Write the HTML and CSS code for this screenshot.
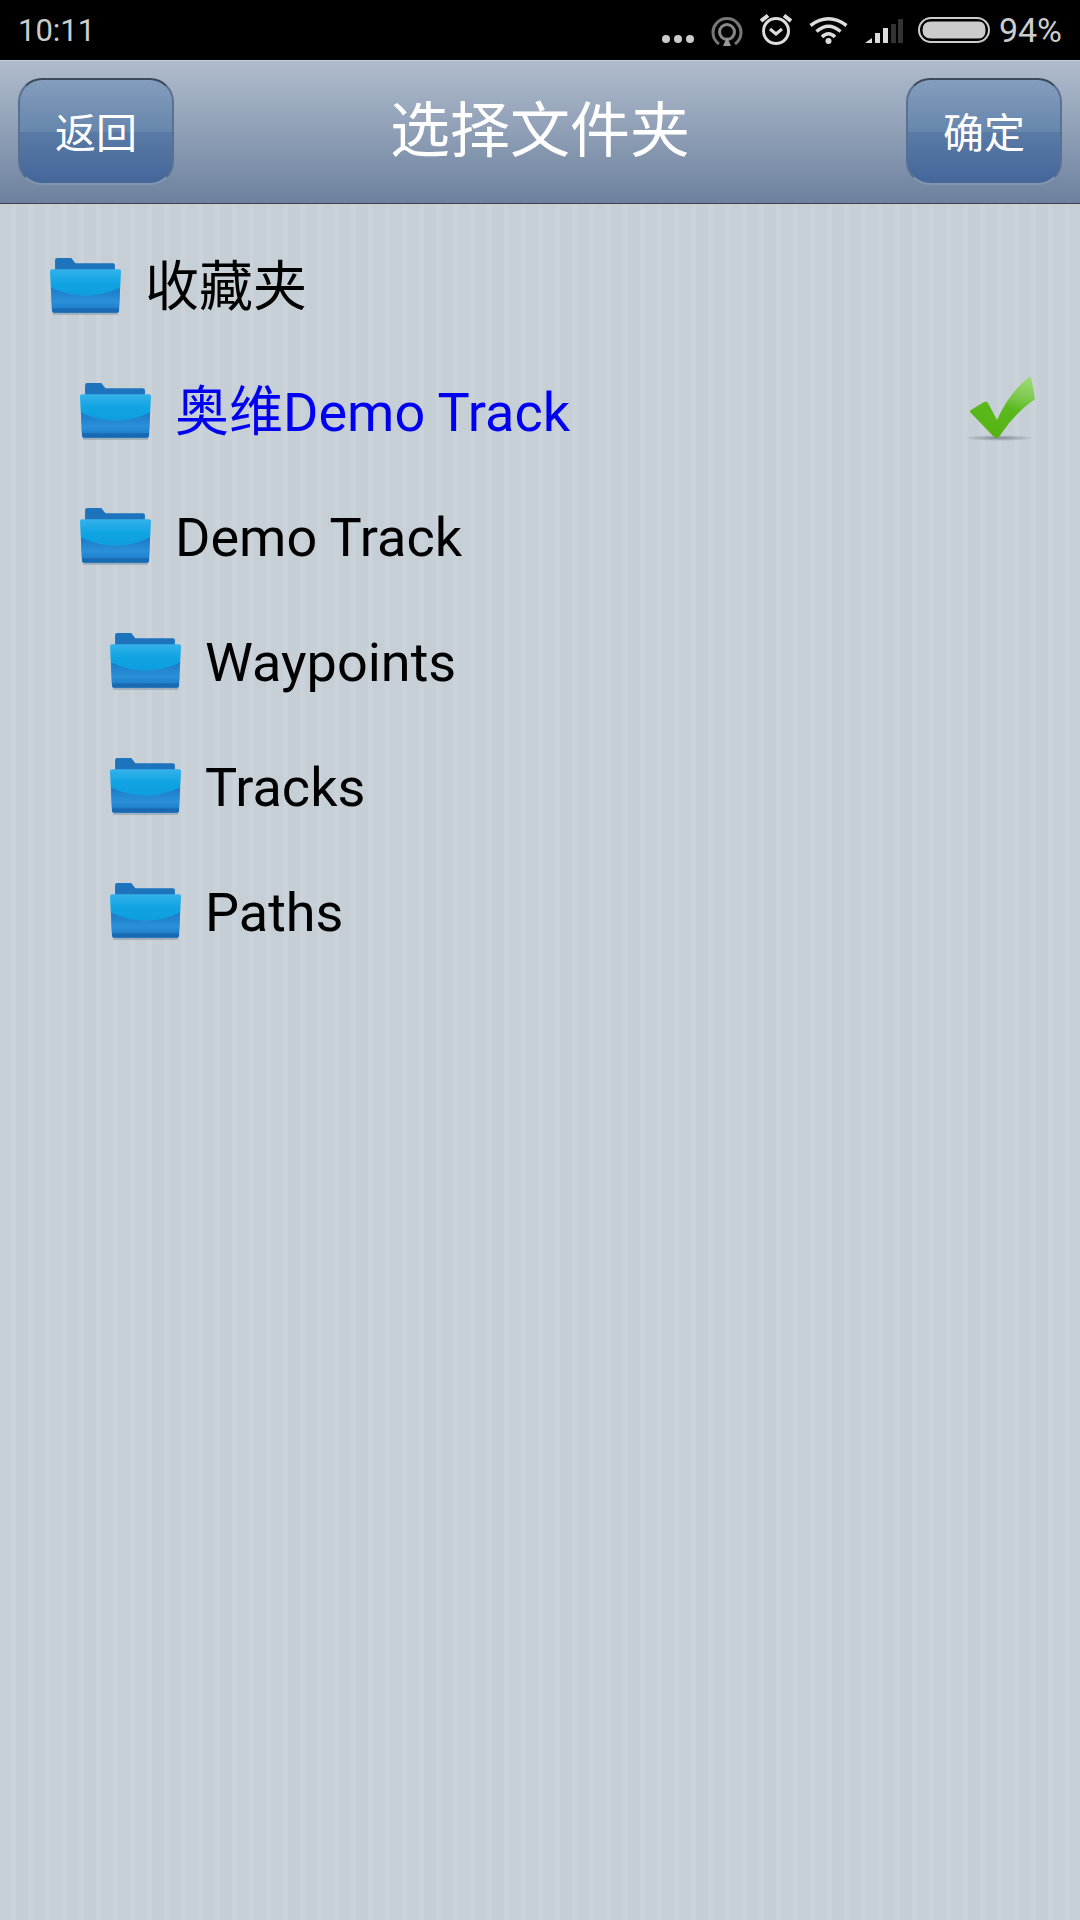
FILE: index.html
```html
<!DOCTYPE html>
<html lang="zh-CN">
<head>
  <meta charset="UTF-8">
  <meta name="viewport" content="width=device-width, initial-scale=1.0">
  <title>选择文件夹</title>
  <link rel="stylesheet" href="styles.css">
</head>
<body>
  <svg class="defs" width="0" height="0">
    <defs>
      <linearGradient id="folder-front" x1="0" y1="0" x2="0" y2="1">
        <stop offset="0" stop-color="#35b2ea"/>
        <stop offset="0.3" stop-color="#10a4e3"/>
        <stop offset="1" stop-color="#0b96da"/>
      </linearGradient>
      <linearGradient id="folder-pocket" x1="0" y1="0" x2="0" y2="1">
        <stop offset="0" stop-color="#1c7ac8"/>
        <stop offset="0.55" stop-color="#2a90d8"/>
        <stop offset="0.8" stop-color="#2181cd"/>
        <stop offset="0.84" stop-color="#1969b2"/>
        <stop offset="1" stop-color="#1a6ab4"/>
      </linearGradient>
      <linearGradient id="check-fill" x1="0.7" y1="0" x2="0.4" y2="1">
        <stop offset="0" stop-color="#9bd870"/>
        <stop offset="0.3" stop-color="#7ac84a"/>
        <stop offset="0.5" stop-color="#5cb81c"/>
        <stop offset="1" stop-color="#55b414"/>
      </linearGradient>
      <radialGradient id="check-shadow">
        <stop offset="0" stop-color="#5f6a72" stop-opacity="0.7"/>
        <stop offset="1" stop-color="#5f6a72" stop-opacity="0"/>
      </radialGradient>
      <symbol id="folder" viewBox="0 0 70 56">
        <path d="M5 2 Q5 0 7 0 H21 L25 5 H62 Q64 5 64 7 V14 H5 Z" fill="#1d74bd"/>
        <path d="M0 13 Q0 11 2 11 H68 Q70 11 70 13 L68 52 Q68 54 66 54 H4 Q2 54 2 52 Z" fill="url(#folder-front)"/>
        <path d="M1 29 Q35 45 69 29 L68 52 Q68 54 66 54 H4 Q2 54 2 52 Z" fill="url(#folder-pocket)"/>
        <rect x="3" y="54" width="64" height="2" fill="#6f8498" opacity="0.45"/>
      </symbol>
    </defs>
  </svg>

  <div class="status-bar">
    <span class="clock">10:11</span>
    <div class="status-icons">
      <svg class="ic-dots" width="32" height="10" viewBox="0 0 32 10">
        <circle cx="4" cy="5" r="4" fill="#ccc"/>
        <circle cx="16" cy="5" r="4" fill="#ccc"/>
        <circle cx="28" cy="5" r="4" fill="#ccc"/>
      </svg>
      <svg class="ic-cast" width="32" height="30" viewBox="0 0 32 30">
        <path d="M8 27 A14 14 0 1 1 24 27" fill="none" stroke="#777" stroke-width="3"/>
        <circle cx="16" cy="15" r="7.5" fill="none" stroke="#888" stroke-width="3"/>
        <path d="M16 20 L20 29 H12 Z" fill="#999"/>
      </svg>
      <svg class="ic-alarm" width="32" height="31" viewBox="0 0 32 31">
        <circle cx="16" cy="17" r="12.5" fill="none" stroke="#ddd" stroke-width="3"/>
        <path d="M10 15 L16 20 L22 15" fill="none" stroke="#ddd" stroke-width="3"/>
        <path d="M1 7 L8 1.5 M31 7 L24 1.5" stroke="#ddd" stroke-width="4"/>
      </svg>
      <svg class="ic-wifi" width="39" height="28" viewBox="0 0 39 28">
        <path d="M1.5 9.5 Q19.5 -4 37.5 9.5 M7.5 15.5 Q19.5 5 31.5 15.5 M13 21 Q19.5 14.5 26 21" fill="none" stroke="#ddd" stroke-width="3.5"/>
        <circle cx="19.5" cy="25" r="3" fill="#ddd"/>
      </svg>
      <svg class="ic-signal" width="38" height="26" viewBox="0 0 38 26">
        <path d="M0 25 L7 20 V25 Z" fill="#ddd"/>
        <rect x="10" y="15" width="5" height="10" fill="#ddd"/>
        <rect x="18" y="10" width="5" height="15" fill="#ddd"/>
        <rect x="26" y="6" width="5" height="19" fill="#333"/>
        <rect x="33" y="1" width="5" height="24" fill="#333"/>
      </svg>
      <svg class="ic-battery" width="72" height="26" viewBox="0 0 72 26">
        <rect x="1" y="1" width="70" height="24" rx="12" fill="none" stroke="#ccc" stroke-width="2"/>
        <path d="M13 4.5 H61 Q67.5 4.5 67.5 13 Q67.5 21.5 61 21.5 H13 Q4.5 21.5 4.5 13 Q4.5 4.5 13 4.5 Z" fill="#ccc"/>
      </svg>
      <span class="percent">94%</span>
    </div>
  </div>

  <div class="title-bar">
    <button class="bar-btn">返回</button>
    <h1 class="title">选择文件夹</h1>
    <button class="bar-btn">确定</button>
  </div>

  <div class="folder-list">
    <div class="folder-row">
      <svg class="folder-icon"><use href="#folder"/></svg>
      <span class="folder-name">收藏夹</span>
    </div>
    <div class="folder-row level-1 selected">
      <svg class="folder-icon"><use href="#folder"/></svg>
      <span class="folder-name">奥维Demo Track</span>
      <svg class="check" width="80" height="70" viewBox="0 0 80 70">
        <ellipse cx="36" cy="63" rx="36" ry="3" fill="url(#check-shadow)"/>
        <path d="M66 2 Q68 2 69 6 L72 24 Q52 38 38 59 Q35 65 31 62 L8 38 Q6 36 8 35 L21 27 Q24 26 25 28 L34 45 Q46 18 66 2 Z" fill="url(#check-fill)"/>
      </svg>
    </div>
    <div class="folder-row level-1">
      <svg class="folder-icon"><use href="#folder"/></svg>
      <span class="folder-name">Demo Track</span>
    </div>
    <div class="folder-row level-2">
      <svg class="folder-icon"><use href="#folder"/></svg>
      <span class="folder-name">Waypoints</span>
    </div>
    <div class="folder-row level-2">
      <svg class="folder-icon"><use href="#folder"/></svg>
      <span class="folder-name">Tracks</span>
    </div>
    <div class="folder-row level-2">
      <svg class="folder-icon"><use href="#folder"/></svg>
      <span class="folder-name">Paths</span>
    </div>
  </div>
</body>
</html>
```

FILE: styles.css
```css
* {
  box-sizing: border-box;
}
html, body {
  height: 100%;
}
body {
  margin: 0;
  display: flex;
  flex-direction: column;
  font-family: Roboto, "Noto Sans CJK SC", sans-serif;
  background-color: #c5cdd6;
}
.defs {
  position: absolute;
}
.status-bar {
  height: 60px;
  flex: none;
  display: flex;
  align-items: center;
  justify-content: space-between;
  padding: 0 18px;
  background-color: #000;
  color: #ccc;
}
.clock {
  font-size: 31px;
}
.status-icons {
  display: flex;
  align-items: center;
}
.ic-dots {
  margin-top: 18px;
}
.ic-cast {
  margin-left: 17px;
  margin-top: 4px;
}
.ic-alarm {
  margin-left: 17px;
  margin-top: -1px;
}
.ic-wifi {
  margin-left: 17px;
}
.ic-signal {
  margin-left: 17px;
  margin-top: 2px;
}
.ic-battery {
  margin-left: 15px;
}
.percent {
  margin-left: 9px;
  font-size: 34px;
}
.title-bar {
  height: 144px;
  flex: none;
  display: flex;
  align-items: center;
  justify-content: space-between;
  padding: 0 18px;
  border-top: 1px solid #c4cfdc;
  border-bottom: 1px solid #39424d;
  background: linear-gradient(#b0bccd, #6d819e);
}
.title {
  margin: 0;
  font-size: 60px;
  line-height: 70px;
  font-weight: 400;
  color: #fff;
}
.bar-btn {
  width: 156px;
  height: 107px;
  margin-top: -1px;
  padding: 5px 0 0;
  border: 2px solid #5a7090;
  border-top-color: #3d4a5c;
  border-bottom-color: #8095b0;
  border-radius: 24px;
  background: linear-gradient(#849dbd, #6686ac 50%, #5a7ba6 50%, #44669a);
  color: #fff;
  font-family: inherit;
  font-size: 41px;
  line-height: 50px;
}
.folder-list {
  flex: 1;
  padding-top: 21px;
  background-color: #c6ced6;
  background-image: repeating-linear-gradient(90deg, #c6ced6 0, #c6ced6 10px, #cbd2da 12px, #cbd2da 15px, #c6ced6 17px);
}
.folder-row {
  height: 125px;
  display: flex;
  align-items: center;
  padding-left: 50px;
  padding-right: 37px;
}
.level-1 {
  padding-left: 80px;
}
.level-2 {
  padding-left: 110px;
}
.folder-icon {
  width: 71px;
  height: 57px;
  flex: none;
  margin-top: -3px;
}
.folder-name {
  margin-left: 24px;
  font-size: 54px;
  line-height: 64px;
  color: #000;
}
.selected .folder-name {
  color: #0000f0;
}
.check {
  margin-left: auto;
  margin-top: -6px;
}
```
